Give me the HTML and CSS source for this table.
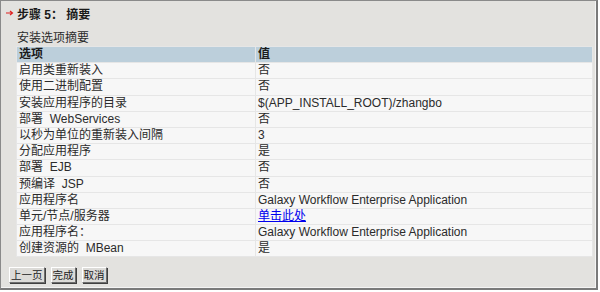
FILE: index.html
```html
<!DOCTYPE html>
<html lang="zh-CN">
<head>
    <meta charset="UTF-8">
    <title>步骤 5： 摘要</title>
    <link rel="stylesheet" href="styles.css">
</head>
<body>
    <div class="panel">
        <div class="step-title">
            <svg class="step-arrow" width="8" height="6" viewBox="0 0 8 6">
                <path d="M0 3H6M4 1L6.5 3L4 5" fill="none" stroke="#e02020" stroke-width="1.2"/>
            </svg>
            <span>步骤 5： 摘要</span>
        </div>

        <div class="summary-caption">安装选项摘要</div>

        <table class="summary">
            <tr class="head">
                <th class="col-opt">选项</th>
                <th>值</th>
            </tr>
            <tr><td>启用类重新装入</td><td>否</td></tr>
            <tr><td>使用二进制配置</td><td>否</td></tr>
            <tr><td>安装应用程序的目录</td><td>$(APP_INSTALL_ROOT)/zhangbo</td></tr>
            <tr><td>部署 &nbsp;WebServices</td><td>否</td></tr>
            <tr><td>以秒为单位的重新装入间隔</td><td>3</td></tr>
            <tr><td>分配应用程序</td><td>是</td></tr>
            <tr><td>部署 &nbsp;EJB</td><td>否</td></tr>
            <tr><td>预编译 &nbsp;JSP</td><td>否</td></tr>
            <tr><td>应用程序名</td><td>Galaxy Workflow Enterprise Application</td></tr>
            <tr><td>单元/节点/服务器</td><td><a href="#">单击此处</a></td></tr>
            <tr><td>应用程序名：</td><td>Galaxy Workflow Enterprise Application</td></tr>
            <tr><td>创建资源的 &nbsp;MBean</td><td>是</td></tr>
        </table>

        <div class="actions">
            <button class="btn">上一页</button>
            <button class="btn">完成</button>
            <button class="btn">取消</button>
        </div>
    </div>
</body>
</html>
```

FILE: styles.css
```css
body {
    margin: 0;
    background: #ffffff;
    font-family: "Liberation Sans", "Noto Sans CJK SC", sans-serif;
    font-size: 12px;
    color: #2b2b2b;
}

.panel {
    width: 598px;
    height: 290px;
    box-sizing: border-box;
    background: #e3e2df;
    border: 1px solid #8a8a8a;
    border-right: 2px solid #7a7a7a;
    border-bottom: 2px solid #7a7a7a;
    box-shadow: inset -1px -1px 0 #f4f4f4;
}

.step-title {
    display: flex;
    align-items: center;
    height: 24px;
    padding-left: 5px;
    font-weight: bold;
    color: #1a1a1a;
}

.step-arrow {
    margin-right: 3px;
}

.summary-caption {
    padding: 6px 0 0 16px;
    height: 15px;
    line-height: 14px;
}

.summary {
    margin-left: 15px;
    width: 577px;
    border-collapse: separate;
    border-spacing: 1px;
    background: #e6e6e6;
}

.summary th,
.summary td {
    height: 15.2px;
    padding: 0 0 0 2px;
    line-height: 15px;
    text-align: left;
    white-space: nowrap;
    vertical-align: middle;
}

.summary td {
    background: #f7f7f7;
}

.summary th {
    background: #bccfdb;
    font-weight: bold;
    color: #1a1a1a;
}

.summary .col-opt {
    width: 236px;
}

.summary a {
    color: #0000ee;
    text-decoration: underline;
}

.actions {
    display: flex;
    padding: 10px 0 0 8px;
}

.btn {
    height: 16px;
    padding: 0 1px;
    margin: 0 6px 0 0;
    font-family: "Liberation Sans", "Noto Sans CJK SC", sans-serif;
    font-size: 10.5px;
    line-height: 13px;
    color: #222;
    background: #dcdbd8;
    border: 1px solid;
    border-color: #ffffff #6e6e6e #6e6e6e #ffffff;
    box-shadow: 1px 1px 0 #404040;
}
```
